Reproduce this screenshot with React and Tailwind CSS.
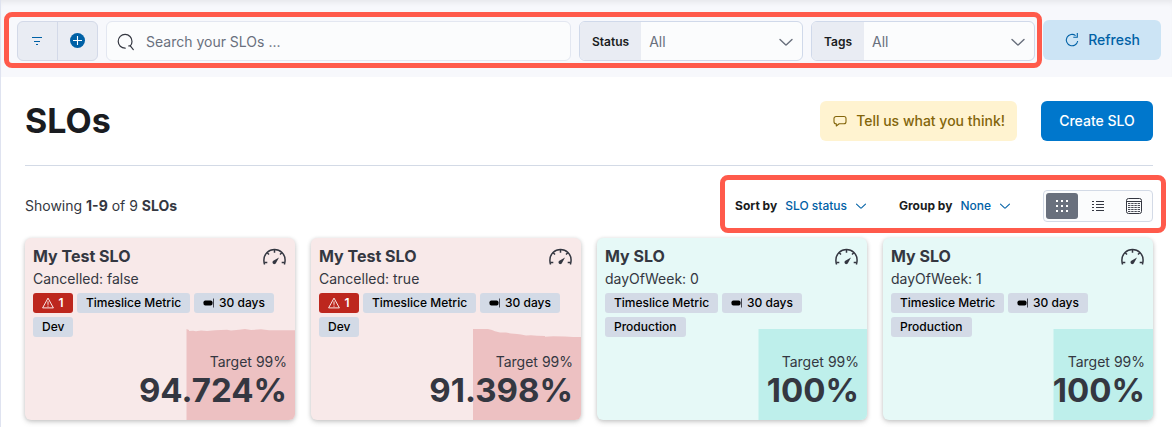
import React from "react";

const SLOS = [
  {
    id: "a",
    name: "My Test SLO",
    group: "Cancelled: false",
    alerts: 1,
    tags: ["Dev"],
    value: "94.724%",
    tone: "danger",
    area: "M161.5 90V-1L164 0V1L168 0.7L171 1.3L176 0.5L182 1.1L190 0.3L202 -0.3L206 0.5L214 -0.2L220 -0.9L226 0L236 -0.7L244 0.2H270V90Z",
  },
  {
    id: "b",
    name: "My Test SLO",
    group: "Cancelled: true",
    alerts: 1,
    tags: ["Dev"],
    value: "91.398%",
    tone: "danger",
    area: "M162 90V-1H177L181 0L184 1.2L189 2.4H195L200 3.6L206 4L210 4.4L215 5.4L220 5.2L226 5.8L234 6V6.8L242 6.2L254 6.6L262 7H270V90Z",
  },
  {
    id: "c",
    name: "My SLO",
    group: "dayOfWeek: 0",
    alerts: 0,
    tags: ["Production"],
    value: "100%",
    tone: "success",
    area: "M161.5 90V-1H270V90Z",
  },
  {
    id: "d",
    name: "My SLO",
    group: "dayOfWeek: 1",
    alerts: 0,
    tags: ["Production"],
    value: "100%",
    tone: "success",
    area: "M170.5 90V-1H270V90Z",
  },
];

const TONES = {
  danger: { card: "bg-[#f8e9e9]", area: "fill-[#edc1c2]" },
  success: { card: "bg-[#e6f9f7]", area: "fill-[#beefeb]" },
};

function Chevron({ className }) {
  return (
    <svg viewBox="0 0 16 16" fill="none" stroke="currentColor" strokeWidth="1.4" strokeLinecap="round" strokeLinejoin="round" aria-hidden="true" className={className}>
      <path d="M2 5.5 7.3 10.6a1 1 0 0 0 1.4 0L14 5.5" />
    </svg>
  );
}

function FilterIcon() {
  return (
    <svg viewBox="0 0 16 16" className="size-4" fill="none" stroke="currentColor" aria-hidden="true">
      <path d="M2 4.5h10M4 8.5h6M6 11.500h2" strokeWidth="1.200" />
    </svg>
  );
}

function PlusIcon() {
  return (
    <svg viewBox="0 0 16 16" className="size-4" aria-hidden="true">
      <circle cx="7.5" cy="7.5" r="7.5" fill="currentColor" />
      <path d="M7.5 3v9M3 7.5h9" stroke="#fff" strokeWidth="1.1" fill="none" />
    </svg>
  );
}

function SearchIcon() {
  return (
    <svg viewBox="0 0 18 18" className="size-[18px]" fill="none" stroke="#343741" strokeWidth="1.2" strokeLinecap="round" aria-hidden="true">
      <path d="M8.2 15.2A6.9 6.9 0 1 1 15 8.4c0 1.6-.6 3.200-1.700 4.400" />
      <path d="M11.800 12.900H13.300L16.300 16.600" />
    </svg>
  );
}

function RefreshIcon() {
  return (
    <svg viewBox="0 0 16 16" className="size-4" fill="none" stroke="currentColor" strokeWidth="1.1" aria-hidden="true">
      <path d="M11.6 3.6A5.7 5.7 0 1 0 13.7 9" />
      <path d="M9.3 5.2H13.3V1" />
    </svg>
  );
}

function CommentIcon() {
  return (
    <svg viewBox="0 0 16 16" className="size-4" fill="none" stroke="currentColor" strokeWidth="1.1" strokeLinejoin="round" aria-hidden="true">
      <path d="M4 3.5h8a2 2 0 0 1 2 2v3.3a2 2 0 0 1-2 2H7.2L4.3 13v-2.2H4a2 2 0 0 1-2-2V5.5a2 2 0 0 1 2-2Z" />
    </svg>
  );
}

function GaugeIcon() {
  return (
    <svg viewBox="0 0 24 18" className="mt-[2px] h-[18px] w-6 shrink-0" fill="none" stroke="#343741" strokeWidth="1.5" aria-hidden="true">
      <path d="M1.6 16.4A10.6 10.6 0 0 1 .9 12a10.6 10.6 0 0 1 21.200 0c0 1.600-.2 3-.7 4.400" />
      <path d="M11.5 1.4v3.400M4.200 4.700l1.800 1.800M18.800 4.700l-1.800 1.800M1.400 14.600h2.900M21.600 14.600h-2.900" />
      <path d="M16 9.400 13 14.900a1.800 1.800 0 1 1-2.200-2.300Z" fill="#343741" stroke="none" />
    </svg>
  );
}

function WarningIcon() {
  return (
    <svg viewBox="0 0 12 12" className="size-3" fill="none" stroke="currentColor" strokeWidth="0.9" strokeLinejoin="round" aria-hidden="true">
      <path d="M6 1.1 11.4 10.9H.6Z" />
      <path d="M6 4.3v3.5M6 8.6v1.1" />
    </svg>
  );
}

function WindowIcon() {
  return (
    <svg viewBox="0 0 12 12" className="size-3" aria-hidden="true">
      <rect x="0.5" y="3.5" width="9" height="5" rx="1.8" fill="#000" />
      <path d="M10.5 1.5v9" stroke="#343741" strokeWidth="0.9" />
    </svg>
  );
}

function GridIcon() {
  return (
    <svg viewBox="0 0 16 16" className="size-4" fill="currentColor" aria-hidden="true">
      <path d="M2 2h2v2H2zM7 2h2v2H7zM12 2h2v2h-2zM2 7h2v2H2zM7 7h2v2H7zM12 7h2v2h-2zM2 12h2v2H2zM7 12h2v2H7zM12 12h2v2h-2z" />
    </svg>
  );
}

function ListIcon() {
  return (
    <svg viewBox="0 0 16 16" className="size-4" fill="currentColor" aria-hidden="true">
      <path d="M2 3h2v1H2zM6 3h8v1H6zM2 6h2v1H2zM6 6h8v1H6zM2 9h2v1H2zM6 9h8v1H6zM2 12h2v1H2zM6 12h8v1H6z" />
    </svg>
  );
}

function TableIcon() {
  return (
    <svg viewBox="0 0 16 16" className="size-4" fill="none" stroke="currentColor" aria-hidden="true">
      <rect x="0.5" y="0.5" width="15" height="15" rx="2" />
      <path d="M1 3.5h14" />
      <path
        d="M2 5.5h2.400M5.200 5.500h2.400M8.400 5.500h2.400M11.600 5.500h2.400M2 7.500h2.400M5.200 7.500h2.400M8.400 7.500h2.400M11.600 7.500h2.400M2 9.500h2.400M5.200 9.500h2.400M8.400 9.500h2.400M11.600 9.500h2.400M2 11.500h2.400M5.200 11.500h2.400M8.400 11.500h2.400M11.600 11.500h2.400M2 13.500h2.400M5.200 13.500h2.400M8.400 13.500h2.400M11.600 13.500h2.400"
        strokeWidth="0.9"
      />
    </svg>
  );
}

function FilterSelect({ id, label }) {
  return (
    <div className="flex h-10 w-56 shrink-0 overflow-hidden rounded-md border border-[#d0d9ea] bg-[#fbfcfd]">
      <label htmlFor={id} className="flex items-center bg-[#e9ecf3] px-3 pt-px text-xs font-semibold text-[#1a1c21]">
        {label}
      </label>
      <div className="relative flex min-w-0 flex-1">
        <select id={id} className="w-full appearance-none bg-transparent px-2 pt-px text-sm text-[#69707d] outline-none">
          <option>All</option>
        </select>
        <Chevron className="pointer-events-none absolute top-3 right-2 size-4 text-[#69707d]" />
      </div>
    </div>
  );
}

function MenuButton({ label, value }) {
  return (
    <div className="flex items-center gap-2 text-xs">
      <span className="font-bold text-[#1a1c21]">{label}</span>
      <button type="button" className="flex items-center gap-2 font-medium text-[#0061a6]">
        {value}
        <Chevron className="size-3" />
      </button>
    </div>
  );
}

function Badge({ children, danger }) {
  return (
    <span
      className={
        danger
          ? "flex h-5 w-10 items-center justify-center gap-1 rounded-[3px] bg-[#bd271e] text-xs font-semibold text-white"
          : "flex h-5 items-center gap-1 rounded-[3px] bg-[#d3dae6] px-[9px] text-xs font-medium text-black"
      }
    >
      {children}
    </span>
  );
}

function SloCard({ slo }) {
  const tone = TONES[slo.tone];
  return (
    <article
      className={`relative flex h-[182px] flex-col overflow-hidden rounded-md p-2 text-[#343741] shadow-[0_1px_4px_rgba(0,0,0,0.2),0_3px_6px_rgba(0,0,0,0.08)] ${tone.card}`}
    >
      <svg viewBox="0 -4 270 94" preserveAspectRatio="none" className={`absolute inset-x-0 bottom-0 h-[94px] w-full ${tone.area}`} aria-hidden="true">
        <path d={slo.area} />
      </svg>
      <div className="relative flex items-start justify-between">
        <div>
          <h2 className="text-base leading-5 font-bold">{slo.name}</h2>
          <p className="mt-[5px] text-sm leading-4">{slo.group}</p>
        </div>
        <GaugeIcon />
      </div>
      <div className="relative mt-[6px] flex flex-wrap gap-1">
        {slo.alerts > 0 && (
          <Badge danger>
            <WarningIcon />
            {slo.alerts}
          </Badge>
        )}
        <Badge>Timeslice Metric</Badge>
        <Badge>
          <WindowIcon />
          30 days
        </Badge>
        <div className="flex w-full gap-1">
          {slo.tags.map((tag) => (
            <Badge key={tag}>{tag}</Badge>
          ))}
        </div>
      </div>
      <div className="relative mt-auto pb-1 text-right">
        <p className="text-sm leading-5">Target 99%</p>
        <p className="text-[33px] leading-9 font-bold">{slo.value}</p>
      </div>
    </article>
  );
}

export default function App() {
  return (
    <div className="min-h-screen overflow-hidden border-l border-[#dfe3f0] bg-white font-['Inter',sans-serif] text-[#343741]">
      <header className="flex items-center gap-px bg-[#f7f8fc] pt-3 pr-[11px] pb-[9px] pl-[3px] shadow-[inset_0_6px_6px_-4px_rgba(0,0,0,0.08)]">
        <div className="flex min-w-0 flex-1 gap-2 rounded-lg border-[5px] border-[#ff5a4b] pt-1 pr-[2px] pb-[2px] pl-2">
          <div className="flex h-10 w-[81px] shrink-0 overflow-hidden rounded-md border border-[#d3d9e8] bg-[#e9ecf3] text-[#0061a6]">
            <button type="button" aria-label="Filter options" className="flex flex-1 items-center justify-center border-r border-[#d3d9e8]">
              <FilterIcon />
            </button>
            <button type="button" aria-label="Add filter" className="flex flex-1 items-center justify-center">
              <PlusIcon />
            </button>
          </div>
          <label className="flex h-10 min-w-0 flex-1 items-center gap-[11px] rounded-md border border-[#e3e7f1] bg-[#fbfcfd] pt-[2px] pl-[10px]">
            <SearchIcon />
            <input
              type="search"
              aria-label="Search your SLOs"
              placeholder="Search your SLOs ..."
              className="min-w-0 flex-1 bg-transparent text-sm outline-none placeholder:text-[#69707d]"
            />
          </label>
          <FilterSelect id="status" label="Status" />
          <FilterSelect id="tags" label="Tags" />
        </div>
        <button type="button" className="flex h-10 w-[118px] items-center justify-center gap-2 rounded-md bg-[#cce4f5] text-sm font-medium text-[#0061a6]">
          <RefreshIcon />
          Refresh
        </button>
      </header>

      <main className="pt-6 pr-[19px] pb-6 pl-6">
        <div className="flex items-center gap-6 border-b border-[#d3dae6] pb-6">
          <h1 className="mr-auto text-[34px] leading-10 font-bold text-[#1a1c21]">SLOs</h1>
          <button type="button" className="flex h-10 items-center gap-2 rounded-md bg-[#fff3d0] px-3 text-sm font-medium text-[#83650a]">
            <CommentIcon />
            Tell us what you think!
          </button>
          <button type="button" className="h-10 w-28 rounded-md bg-[#0077cc] text-sm font-medium text-white">
            Create SLO
          </button>
        </div>

        <div className="mt-[9px] -mr-[13px] flex items-center justify-between">
          <p className="pt-1 text-sm">
            Showing <strong>1-9</strong> of 9 <strong>SLOs</strong>
          </p>
          <div className="flex items-center gap-8 rounded-lg border-[5px] border-[#ff5a4b] pt-[10px] pr-2 pb-[6px] pl-[10px]">
            <MenuButton label="Sort by" value="SLO status" />
            <MenuButton label="Group by" value="None" />
            <div role="group" aria-label="View mode" className="flex h-8 w-[110px] items-center rounded border border-[#d3dae6] bg-[#fbfcfd] pl-[2px]">
              <button type="button" aria-label="Card view" aria-pressed="true" className="mr-[2px] flex h-[26px] w-8 items-center justify-center rounded-[3px] bg-[#69707d] text-white">
                <GridIcon />
              </button>
              <button type="button" aria-label="List view" aria-pressed="false" className="flex h-[26px] flex-1 items-center justify-center">
                <ListIcon />
              </button>
              <button type="button" aria-label="Compact view" aria-pressed="false" className="flex h-[26px] flex-1 items-center justify-center">
                <TableIcon />
              </button>
            </div>
          </div>
        </div>

        <section aria-label="SLO cards" className="mt-[5px] grid grid-cols-4 gap-4">
          {SLOS.map((slo) => (
            <SloCard key={slo.id} slo={slo} />
          ))}
        </section>
      </main>
    </div>
  );
}
